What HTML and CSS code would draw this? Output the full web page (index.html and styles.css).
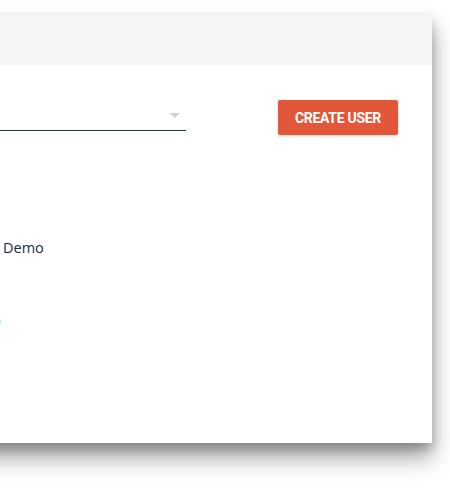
FILE: index.html
```html
<!DOCTYPE html>
<html>
<head>
<meta charset="utf-8">
<link rel="stylesheet" href="styles.css">
</head>
<body>
<div class="page">
  <div class="card">
    <div class="card-header"></div>
    <div class="card-body">
      <div class="toolbar">
        <div class="select">
          <span class="select-arrow"></span>
        </div>
        <button class="btn-create">CREATE USER</button>
      </div>
      <div class="details">
        <div class="detail-row">
          <span class="detail-label">Organization:</span>
          <span class="detail-value">Demo</span>
        </div>
        <div class="link-row">
          <a class="detail-link">View details</a>
        </div>
      </div>
    </div>
  </div>
</div>
</body>
</html>
```

FILE: styles.css
```css
html, body {
  margin: 0;
  padding: 0;
  background: #ffffff;
  overflow: hidden;
  width: 450px;
  height: 490px;
}

.page {
  padding-top: 15px;
}

.card {
  margin-left: -300px;
  width: 732px;
  height: 428px;
  background: #ffffff;
  box-shadow: 0 14px 22px rgba(0, 0, 0, 0.38), 0 6px 10px rgba(0, 0, 0, 0.2);
  display: flex;
  flex-direction: column;
}

.card-header {
  height: 50px;
  background: #f5f5f5;
}

.card-body {
  padding: 35px 34px 0 24px;
  font-family: "Open Sans", "Liberation Sans", sans-serif;
}

.toolbar {
  display: flex;
  align-items: flex-start;
}

.select {
  width: 456px;
  height: 30px;
  border-bottom: 1px solid #1d3557;
  display: flex;
  align-items: flex-start;
  justify-content: flex-end;
  padding-right: 6px;
  box-sizing: content-box;
}

.select-arrow {
  margin-top: 13px;
  width: 0;
  height: 0;
  border-left: 5px solid transparent;
  border-right: 5px solid transparent;
  border-top: 5px solid #d0d0d0;
}

.btn-create {
  margin-left: auto;
  width: 120px;
  height: 35px;
  background: #e2573a;
  color: #ffffff;
  border: none;
  border-radius: 2px;
  font-family: Roboto, "Liberation Sans", sans-serif;
  font-weight: 700;
  font-size: 14px;
  letter-spacing: -0.3px;
  box-shadow: 0 1px 3px rgba(0, 0, 0, 0.2);
  padding: 0;
}

.details {
  padding-top: 103px;
  display: flex;
  flex-direction: column;
  gap: 51px;
}

.detail-row {
  display: grid;
  grid-template-columns: 279px auto;
  font-size: 14.5px;
  line-height: 20px;
  color: #1a2a48;
}

.detail-label {
  text-align: right;
  padding-right: 8px;
}

.detail-value {
  color: #1a2a48;
}

.link-row {
  width: 277px;
  text-align: right;
  font-size: 14px;
  line-height: 20px;
}

.detail-link {
  color: #2196f3;
}
```
